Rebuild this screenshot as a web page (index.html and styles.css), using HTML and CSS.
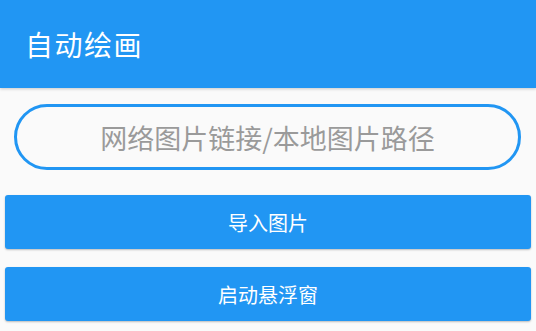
FILE: index.html
```html
<!DOCTYPE html>
<html lang="zh-CN">
<head>
    <meta charset="UTF-8">
    <meta name="viewport" content="width=device-width, initial-scale=1.0">
    <title>自动绘画</title>
    <link rel="stylesheet" href="styles.css">
</head>
<body>
    <header class="app-bar">
        <h1>自动绘画</h1>
    </header>

    <main class="content">
        <div class="input-wrap">
            <input type="text" class="path-input" placeholder="网络图片链接/本地图片路径">
        </div>
        <button class="action-btn">导入图片</button>
        <button class="action-btn">启动悬浮窗</button>
    </main>
</body>
</html>
```

FILE: styles.css
```css
* {
    margin: 0;
    padding: 0;
    box-sizing: border-box;
    font-family: "Noto Sans CJK SC", "Noto Sans", sans-serif;
}

body {
    background: #fafafa;
    width: 536px;
    height: 331px;
    overflow: hidden;
}

.app-bar {
    background: #2196f3;
    height: 88px;
    display: flex;
    align-items: center;
    padding-left: 25px;
    box-shadow: 0 1px 3px rgba(0, 0, 0, 0.2);
}

.app-bar h1 {
    color: #fff;
    font-size: 28px;
    font-weight: 400;
    letter-spacing: 1.5px;
}

.content {
    display: flex;
    flex-direction: column;
    padding: 16px 5px 0;
}

.input-wrap {
    padding: 0 10px 0 9px;
    margin-bottom: 25px;
}

.path-input {
    width: 100%;
    height: 66px;
    border: 3px solid #2196f3;
    border-radius: 33px;
    background: #fafafa;
    font-size: 27px;
    text-align: center;
    color: #333;
    outline: none;
}

.path-input::placeholder {
    color: #9a9a9a;
}

.action-btn {
    height: 54px;
    border: none;
    border-radius: 3px;
    background: #2196f3;
    color: #fff;
    font-size: 20px;
    box-shadow: 0 1px 2px rgba(0, 0, 0, 0.25);
    margin-bottom: 18px;
    cursor: pointer;
}
```
